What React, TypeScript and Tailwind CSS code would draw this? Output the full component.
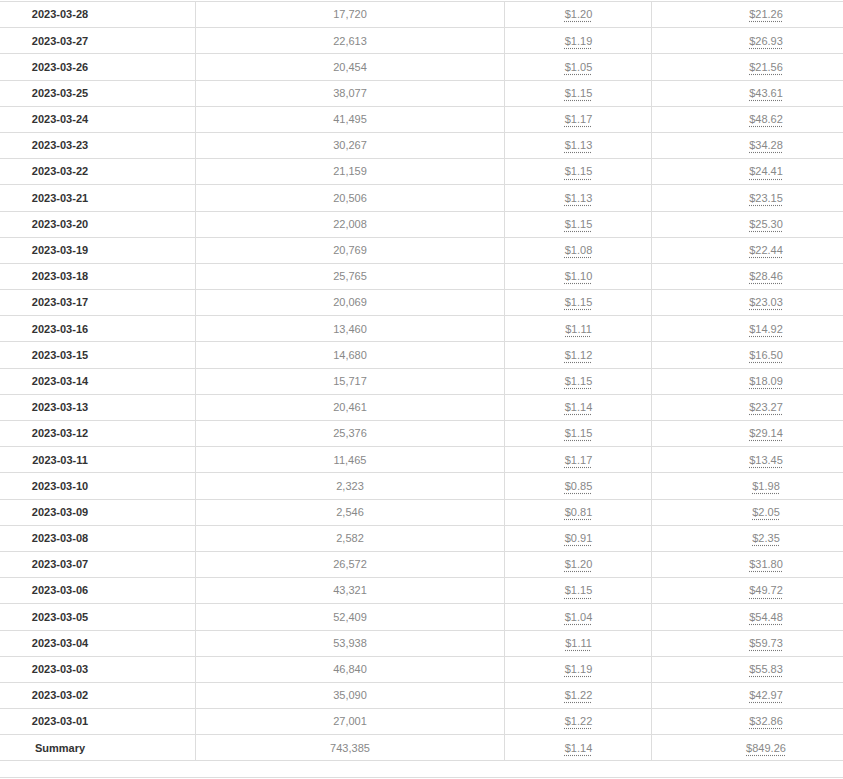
const rows: [string, string, string, string][] = [
  ["2023-03-28", "17,720", "$1.20", "$21.26"],
  ["2023-03-27", "22,613", "$1.19", "$26.93"],
  ["2023-03-26", "20,454", "$1.05", "$21.56"],
  ["2023-03-25", "38,077", "$1.15", "$43.61"],
  ["2023-03-24", "41,495", "$1.17", "$48.62"],
  ["2023-03-23", "30,267", "$1.13", "$34.28"],
  ["2023-03-22", "21,159", "$1.15", "$24.41"],
  ["2023-03-21", "20,506", "$1.13", "$23.15"],
  ["2023-03-20", "22,008", "$1.15", "$25.30"],
  ["2023-03-19", "20,769", "$1.08", "$22.44"],
  ["2023-03-18", "25,765", "$1.10", "$28.46"],
  ["2023-03-17", "20,069", "$1.15", "$23.03"],
  ["2023-03-16", "13,460", "$1.11", "$14.92"],
  ["2023-03-15", "14,680", "$1.12", "$16.50"],
  ["2023-03-14", "15,717", "$1.15", "$18.09"],
  ["2023-03-13", "20,461", "$1.14", "$23.27"],
  ["2023-03-12", "25,376", "$1.15", "$29.14"],
  ["2023-03-11", "11,465", "$1.17", "$13.45"],
  ["2023-03-10", "2,323", "$0.85", "$1.98"],
  ["2023-03-09", "2,546", "$0.81", "$2.05"],
  ["2023-03-08", "2,582", "$0.91", "$2.35"],
  ["2023-03-07", "26,572", "$1.20", "$31.80"],
  ["2023-03-06", "43,321", "$1.15", "$49.72"],
  ["2023-03-05", "52,409", "$1.04", "$54.48"],
  ["2023-03-04", "53,938", "$1.11", "$59.73"],
  ["2023-03-03", "46,840", "$1.19", "$55.83"],
  ["2023-03-02", "35,090", "$1.22", "$42.97"],
  ["2023-03-01", "27,001", "$1.22", "$32.86"],
  ["Summary", "743,385", "$1.14", "$849.26"],
]

function Money({ value }: { value: string }) {
  return (
    <abbr className="text-[#888] underline decoration-dotted decoration-[#777] underline-offset-[3px]">
      {value}
    </abbr>
  )
}

export default function App() {
  return (
    <div
      className="w-[843px] h-[779px] overflow-hidden bg-white text-[11px]"
      style={{ fontFamily: '"Liberation Sans", Arial, sans-serif' }}
    >
      <div className="pt-px">
        <div className="w-[880px] border-t border-[#ddd]">
          {rows.map(([date, views, cpm, cost]) => (
            <div
              key={date}
              className="grid grid-cols-[196px_309px_147px_228px] h-[26.2px] box-border border-b border-[#ddd]"
            >
              <div className="flex items-center justify-center pl-px pr-[76px] border-r border-[#ddd] font-bold text-[#333]">
                {date}
              </div>
              <div className="flex items-center justify-center border-r border-[#ddd] text-[#888]">
                {views}
              </div>
              <div className="flex items-center justify-center pl-px border-r border-[#ddd]">
                <Money value={cpm} />
              </div>
              <div className="flex items-center justify-center">
                <Money value={cost} />
              </div>
            </div>
          ))}
        </div>
        <div className="h-[16px]" />
        <div className="w-full border-t border-[#ddd]" />
      </div>
    </div>
  )
}
